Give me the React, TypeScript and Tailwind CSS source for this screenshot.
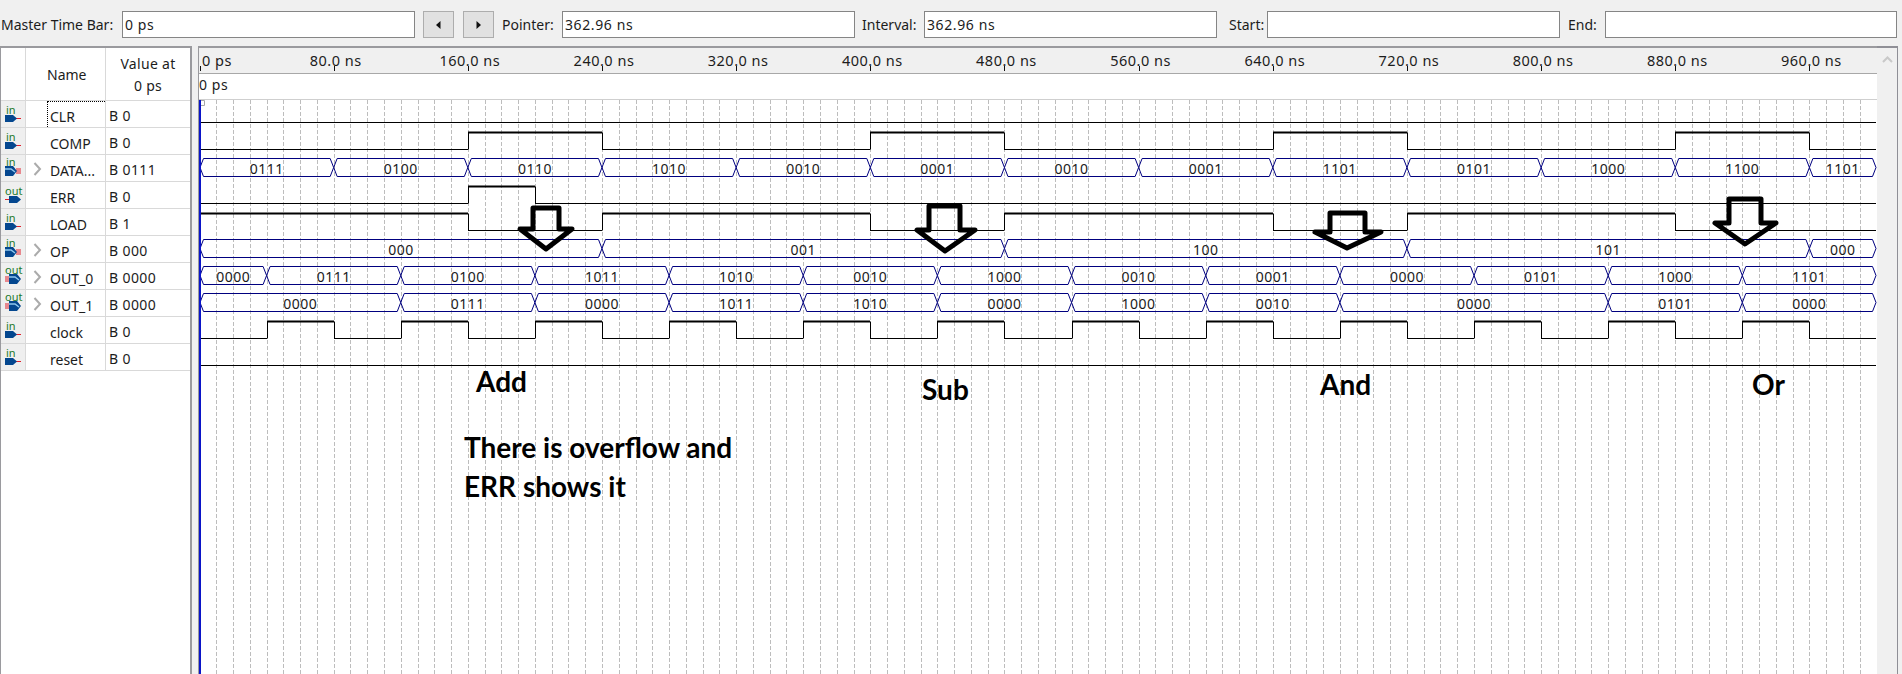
const PX_PER_NS = 1.677;
const X = (ns: number) => 0.5 + ns * PX_PER_NS;
const END = 1677;
const low = (n: number) => 22 + 27 * n;

type Seg = [number, string];

const SIGNALS: { name: string; value: string; dir: "in" | "out"; bus?: boolean }[] = [
  { name: "CLR", value: "B 0", dir: "in" },
  { name: "COMP", value: "B 0", dir: "in" },
  { name: "DATA...", value: "B 0111", dir: "in", bus: true },
  { name: "ERR", value: "B 0", dir: "out" },
  { name: "LOAD", value: "B 1", dir: "in" },
  { name: "OP", value: "B 000", dir: "in", bus: true },
  { name: "OUT_0", value: "B 0000", dir: "out", bus: true },
  { name: "OUT_1", value: "B 0000", dir: "out", bus: true },
  { name: "clock", value: "B 0", dir: "in" },
  { name: "reset", value: "B 0", dir: "in" },
];

// [row, start values] : each segment runs until the next one
const BUSES: { row: number; segs: Seg[] }[] = [
  {
    row: 2,
    segs: [
      [0, "0111"], [80, "0100"], [160, "0110"], [240, "1010"], [320, "0010"], [400, "0001"], [480, "0010"],
      [560, "0001"], [640, "1101"], [720, "0101"], [800, "1000"], [880, "1100"], [960, "1101"],
    ],
  },
  { row: 5, segs: [[0, "000"], [240, "001"], [480, "100"], [720, "101"], [960, "000"]] },
  {
    row: 6,
    segs: [
      [0, "0000"], [40, "0111"], [120, "0100"], [200, "1011"], [280, "1010"], [360, "0010"], [440, "1000"],
      [520, "0010"], [600, "0001"], [680, "0000"], [760, "0101"], [840, "1000"], [920, "1101"],
    ],
  },
  {
    row: 7,
    segs: [
      [0, "0000"], [120, "0111"], [200, "0000"], [280, "1011"], [360, "1010"], [440, "0000"], [520, "1000"],
      [600, "0010"], [680, "0000"], [840, "0101"], [920, "0000"],
    ],
  },
];

// edges where the level flips, first level given by startHigh
const BITS: { row: number; startHigh: boolean; edges: number[] }[] = [
  { row: 0, startHigh: false, edges: [] },
  { row: 1, startHigh: false, edges: [160, 240, 400, 480, 640, 720, 880, 960] },
  { row: 3, startHigh: false, edges: [160, 200] },
  { row: 4, startHigh: true, edges: [160, 240, 400, 480, 640, 720, 880] },
  { row: 8, startHigh: false, edges: [40, 80, 120, 160, 200, 240, 280, 320, 360, 400, 440, 480, 520, 560, 600, 640, 680, 720, 760, 800, 840, 880, 920, 960] },
  { row: 9, startHigh: false, edges: [] },
];

const ARROWS = [
  { l: 533, r: 559, top: 108, sh: 129, wl: 520, wr: 572, tx: 546, ty: 149 },
  { l: 929, r: 960, top: 106, sh: 130, wl: 917, wr: 975, tx: 945, ty: 151 },
  { l: 1330, r: 1365, top: 113, sh: 132, wl: 1315, wr: 1381, tx: 1347, ty: 148 },
  { l: 1729, r: 1761, top: 99, sh: 123, wl: 1715, wr: 1776, tx: 1745, ty: 144 },
];

const TICKS = Array.from({ length: 13 }, (_, i) => i * 80);

function PinIcon({ dir, bus }: { dir: "in" | "out"; bus?: boolean }) {
  const isIn = dir === "in";
  const top = bus ? 11 : 14;
  const bottom = 21;
  const mid = (top + bottom) / 2;
  const x0 = isIn ? 4 : 8;
  const x1 = isIn ? 16 : 20;
  return (
    <svg width="25" height="26" className="block">
      {bus ? (
        [mid - 2, mid, mid + 2].map((y) => (
          <line key={y} x1={isIn ? 15 : 4} x2={isIn ? 20 : 9} y1={y} y2={y} stroke="#e0202c" strokeWidth="1" />
        ))
      ) : (
        <line x1={isIn ? 15 : 4} x2={isIn ? 20 : 9} y1={mid} y2={mid} stroke="#e0202c" strokeWidth="1" />
      )}
      <polygon points={`${x0},${top} ${x1 - 4},${top} ${x1},${mid} ${x1 - 4},${bottom} ${x0},${bottom}`} fill="#04478f" />
      {bus && (
        <polyline points={`${x0},${mid - 2} ${x1 - 6},${mid - 2} ${x1 - 2},${mid + 1}`} fill="none" stroke="#8fc8ee" strokeWidth="1.5" />
      )}
      <text x={isIn ? 5 : 4} y={bus ? 11 : 13} fontSize="11" fill="#1d7a2c" fontFamily="'Noto Sans', sans-serif">
        {dir}
      </text>
    </svg>
  );
}

function SignalRow({ name, value, dir, bus, focused }: { name: string; value: string; dir: "in" | "out"; bus?: boolean; focused?: boolean }) {
  return (
    <div className="flex h-[27px] border-b border-[#d9d9d9]">
      <div className="w-[25px] shrink-0 bg-[#efefef] border-r border-[#d9d9d9]">
        <PinIcon dir={dir} bus={bus} />
      </div>
      <div className="w-[80px] shrink-0 flex border-r border-[#d9d9d9]">
        <div className="w-[21px] shrink-0">
          {bus && (
            <svg width="21" height="26" className="block">
              <path d="M8.5 8 L14 14 L8.5 20" fill="none" stroke="#ababab" strokeWidth="2" />
            </svg>
          )}
        </div>
        <div className={`flex-1 flex items-center pl-[2px] pt-[3px] border-l border-t ${focused ? "border-dotted border-black" : "border-transparent"}`}>
          {name}
        </div>
      </div>
      <div className="flex-1 flex items-center pl-[3px] pt-[3px] tracking-[0.4px]">{value}</div>
    </div>
  );
}

function TextBox({ text, width }: { text?: string; width: string }) {
  return (
    <div className={`${width} h-[27px] shrink-0 bg-white border border-[#858585] flex items-center pl-[2px] tracking-[0.6px] text-[#1c1c1c]`}>
      {text}
    </div>
  );
}

function StepButton({ dir }: { dir: "left" | "right" }) {
  return (
    <div className="w-[31px] h-[27px] shrink-0 bg-[#e1e1e1] border border-[#adadad] flex items-center justify-center">
      <svg width="5" height="8">
        <polygon points={dir === "left" ? "4.5,0 4.5,8 0,4" : "0.5,0 0.5,8 5,4"} fill="#111" />
      </svg>
    </div>
  );
}

function Waves() {
  const grid = Array.from({ length: 99 }, (_, i) => X((i + 1) * 10));
  return (
    <svg width="1678" height="574" className="block bg-white" fontFamily="'Noto Sans', sans-serif">
      {grid.map((x) => (
        <line key={x} x1={Math.round(x) + 0.5} x2={Math.round(x) + 0.5} y1="0" y2="574" stroke="#bdbdbd" strokeDasharray="4 2" />
      ))}

      {BITS.map(({ row, startHigh, edges }) => {
        const yl = low(row) + 0.5;
        const yh = yl - 17;
        const cuts = [0, ...edges, 1e4];
        return (
          <g key={row}>
            {cuts.slice(0, -1).map((c, i) => {
              const high = i % 2 === 0 ? startHigh : !startHigh;
              const a = Math.round(X(c));
              const b = Math.min(Math.round(X(cuts[i + 1])), END);
              return (
                <line key={c} x1={a} x2={b} y1={high ? yh : yl} y2={high ? yh : yl} stroke="#000" strokeWidth={high ? 2 : 1} />
              );
            })}
            {edges.map((e) => (
              <line key={e} x1={Math.round(X(e)) + 0.5} x2={Math.round(X(e)) + 0.5} y1={yh} y2={yl} stroke="#000" />
            ))}
          </g>
        );
      })}

      {BUSES.map(({ row, segs }) => {
        const bot = low(row) + 0.5;
        const top = bot - 18;
        const mid = (top + bot) / 2;
        return (
          <g key={row}>
            {segs.map(([start, label], i) => {
              const a = Math.max(X(start), 1);
              const b = i + 1 < segs.length ? X(segs[i + 1][0]) : END;
              return (
                <g key={start}>
                  <polygon
                    points={`${a},${mid} ${a + 3.5},${top} ${b - 3.5},${top} ${b},${mid} ${b - 3.5},${bot} ${a + 3.5},${bot}`}
                    fill="none"
                    stroke="#00007f"
                  />
                  <text x={(a + b) / 2} y={mid + 6} textAnchor="middle" fontSize="14" fill="#1a1a1a" className="tracking-[0.5px]">
                    {label}
                  </text>
                </g>
              );
            })}
          </g>
        );
      })}

      {ARROWS.map((a, i) => (
        <polygon
          key={i}
          points={`${a.l - 199},${a.top} ${a.r - 199},${a.top} ${a.r - 199},${a.sh} ${a.wr - 199},${a.sh} ${a.tx - 199},${a.ty} ${a.wl - 199},${a.sh} ${a.l - 199},${a.sh}`}
          fill="none"
          stroke="#000"
          strokeWidth="5"
          strokeLinejoin="round"
        />
      ))}

      <rect x="0" y="0" width="2" height="574" fill="#0a14c8" />
      <path d="M2 .5H5.5V5.5H2" fill="#fff" stroke="#a8a8a8" />
    </svg>
  );
}

function Note({ text, className }: { text: string; className: string }) {
  return <div className={`absolute font-bold text-black whitespace-nowrap font-['Lato',sans-serif] text-[28px] leading-[30px] ${className}`}>{text}</div>;
}

export default function App() {
  return (
    <div className="w-[1902px] h-[674px] overflow-hidden flex flex-col bg-[#f0f0f0] text-[14px] text-[#1c1c1c] font-['Noto_Sans',sans-serif]">
      {/* Time bar */}
      <div className="h-[46px] shrink-0 flex items-start pt-[11px]">
        <div className="w-[122px] h-[27px] shrink-0 flex items-center pl-[1px]">Master Time Bar:</div>
        <TextBox width="w-[293px]" text="0 ps" />
        <div className="ml-[8px]">
          <StepButton dir="left" />
        </div>
        <div className="ml-[9px]">
          <StepButton dir="right" />
        </div>
        <div className="w-[68px] h-[27px] shrink-0 flex items-center pl-[8px]">Pointer:</div>
        <TextBox width="w-[293px]" text="362.96 ns" />
        <div className="w-[69px] h-[27px] shrink-0 flex items-center pl-[7px]">Interval:</div>
        <TextBox width="w-[293px]" text="362.96 ns" />
        <div className="w-[50px] h-[27px] shrink-0 flex items-center pl-[12px]">Start:</div>
        <TextBox width="w-[293px]" />
        <div className="w-[45px] h-[27px] shrink-0 flex items-center pl-[8px]">End:</div>
        <TextBox width="w-[292px]" />
      </div>

      <div className="flex-1 flex min-h-0">
        {/* Node list */}
        <div className="w-[192px] shrink-0 bg-white border-t-2 border-l border-r-2 border-[#9a9a9e]">
          <div className="flex h-[53px] border-b border-[#d9d9d9]">
            <div className="w-[25px] shrink-0 border-r border-[#d9d9d9]" />
            <div className="w-[80px] shrink-0 flex items-center pl-[21px] pt-[1px] border-r border-[#d9d9d9]">Name</div>
            <div className="flex-1 flex flex-col items-center justify-center pt-[1px] leading-[22px] tracking-[0.3px]">
              <div>Value at</div>
              <div>0 ps</div>
            </div>
          </div>
          {SIGNALS.map((s, i) => (
            <SignalRow key={s.name} {...s} focused={i === 0} />
          ))}
        </div>

        <div className="w-[6px] shrink-0" />

        {/* Waveform */}
        <div className="w-[1679px] shrink-0 flex flex-col border-t-2 border-l border-[#9a9a9e]">
          <div className="h-[26px] shrink-0 bg-[#f0f0f0] border-b border-[#a8a8a8]">
            <svg width="1678" height="25" className="block" fontFamily="'Noto Sans', sans-serif">
              {TICKS.map((t) => (
                <g key={t}>
                  <line x1={Math.round(X(t)) + 0.5} x2={Math.round(X(t)) + 0.5} y1="18" y2="23" stroke="#111" />
                  <text x={t === 0 ? 3 : X(t) + 2} y="18" textAnchor={t === 0 ? "start" : "middle"} fontSize="14.5" fill="#1c1c1c" className="tracking-[0.5px]">
                    {t === 0 ? "0 ps" : `${t}.0 ns`}
                  </text>
                </g>
              ))}
            </svg>
          </div>
          <div className="h-[26px] shrink-0 bg-white border-b border-[#cfcfcf] flex items-start tracking-[0.6px]">0 ps</div>
          <div className="relative flex-1 min-h-0 overflow-hidden">
            <Waves />
            <Note text="Add" className="left-[277px] top-[266px]" />
            <Note text="Sub" className="left-[723px] top-[274px]" />
            <Note text="And" className="left-[1121px] top-[269px]" />
            <Note text="Or" className="left-[1553px] top-[269px]" />
            <Note text="There is overflow and" className="left-[265px] top-[332px]" />
            <Note text="ERR shows it" className="left-[265px] top-[371px]" />
          </div>
        </div>

        {/* Scrollbar */}
        <div className="w-[21px] shrink-0 bg-[#f0f0f0] border-t-2 border-r border-[#8f8f96] flex justify-center pt-[8px] pl-[1px]">
          <svg width="11" height="7" className="block">
            <path d="M1 6 L5.5 1.5 L10 6" fill="none" stroke="#c9c9c9" strokeWidth="2" />
          </svg>
        </div>
      </div>
    </div>
  );
}
